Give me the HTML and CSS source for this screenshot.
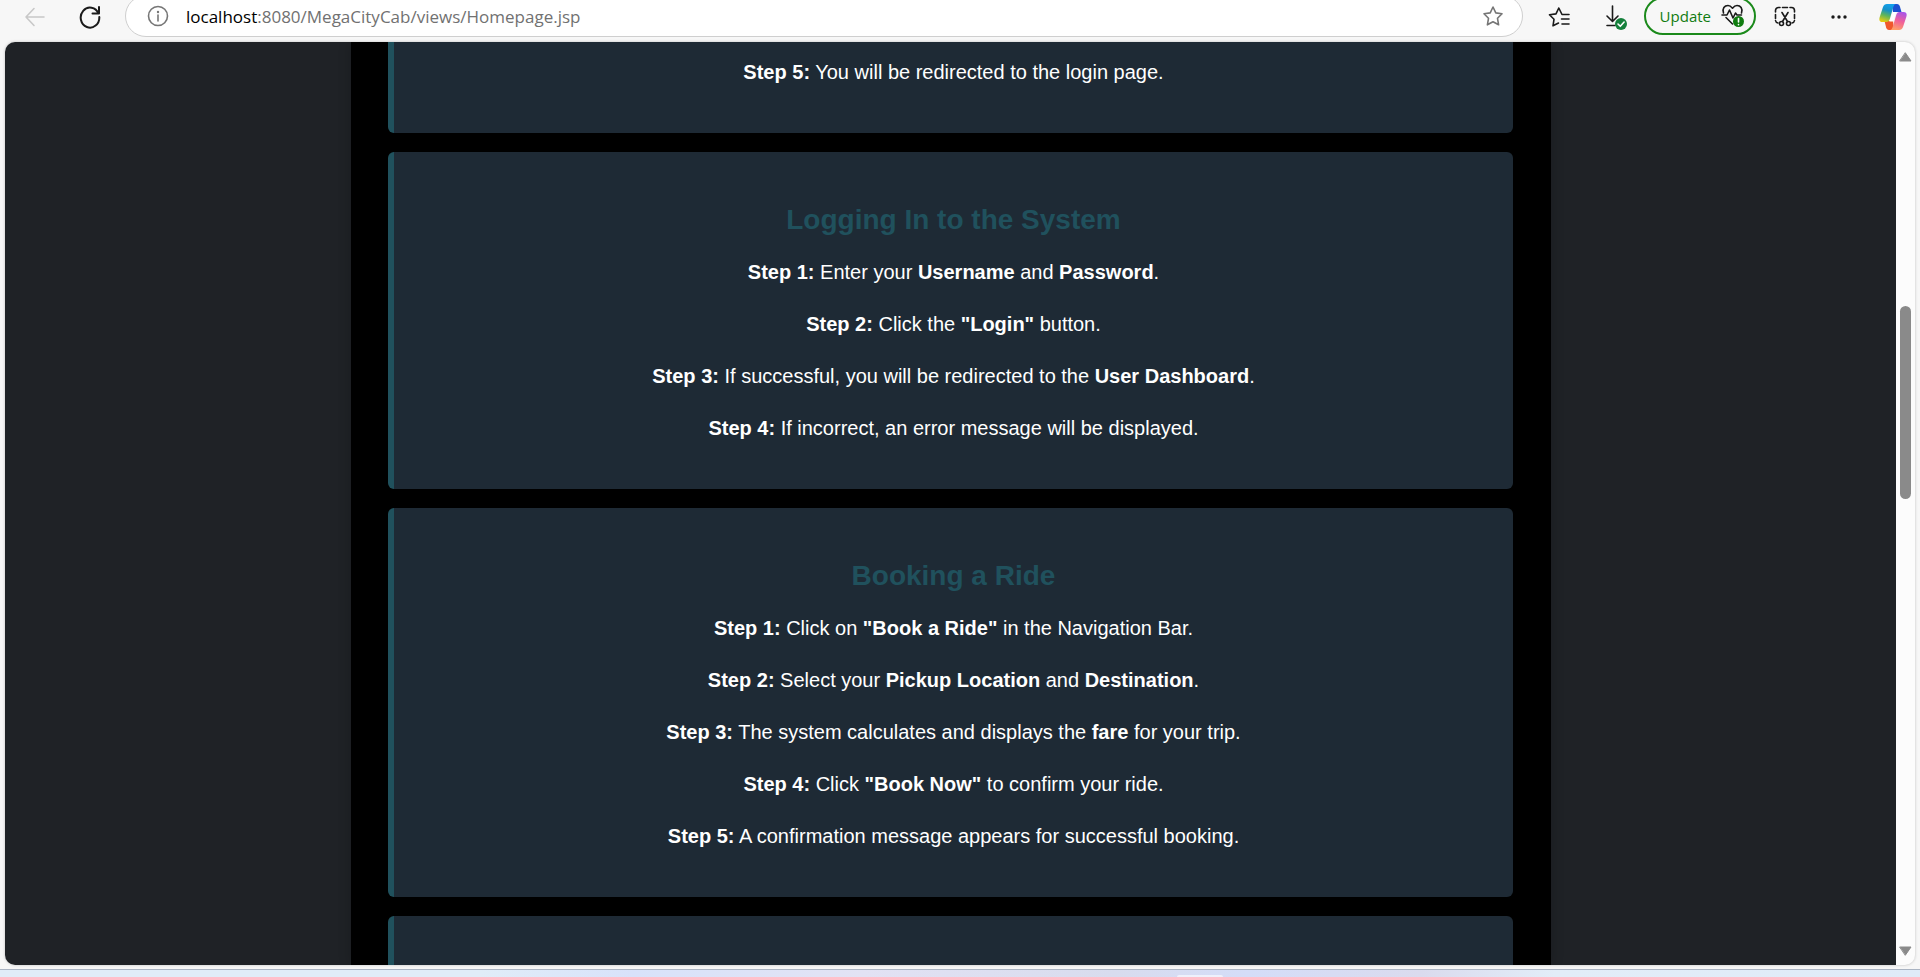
FILE: index.html
```html
<!DOCTYPE html>
<html lang="en">
<head>
<meta charset="utf-8">
<title>MegaCityCab</title>
<link rel="stylesheet" href="styles.css">
</head>
<body>
<header class="toolbar">
  <button class="tool back" aria-label="Back" disabled><svg width="22" height="20" viewBox="0 0 22 20"><path d="M10 1.500L2 10l8 8.500M2 10h18"/></svg></button>
  <button class="tool reload" aria-label="Reload"><svg width="22" height="24" viewBox="0 0 22 24"><path d="M19.500 8.500A9.300 10 0 1 0 20.300 12M20 2v6.500h-6.500"/></svg></button>
  <div class="address">
    <button class="tool info" aria-label="Site information"><svg width="22" height="22" viewBox="0 0 22 22"><circle cx="11" cy="11" r="9.500"/><path d="M11 10v6"/><circle class="dot" cx="11" cy="7" r="1.200"/></svg></button>
    <p class="url"><span class="host">localhost</span>:8080/MegaCityCab/views/Homepage.jsp</p>
    <button class="tool star" aria-label="Add to favorites"><svg width="22" height="22" viewBox="0 0 22 22"><path d="M11 2l2.800 5.900 6.200.9-4.500 4.500 1.100 6.500L11 16.700l-5.600 3.100 1.100-6.500L2 8.800l6.200-.9z"/></svg></button>
  </div>
  <div class="actions">
    <button class="tool" aria-label="Favorites"><svg width="22" height="22" viewBox="0 0 22 22"><path d="M21 8.500H14L10.800 2 8 7.900 1.500 8.800 6 13.300 5 19.800 10.500 17M13.500 13H21M14 18H21"/></svg></button>
    <button class="tool" aria-label="Downloads"><svg width="24" height="26" viewBox="0 0 24 26"><path d="M8.500 2v15M3 12l5.500 5.500L14 12M3 21.500h8"/><circle class="green" cx="17" cy="20" r="6"/><path class="mark" d="M14 20l2.300 2.300 3.800-4.300"/></svg></button>
    <button class="update">Update
      <svg width="24" height="26" viewBox="0 0 24 26"><path d="M2.500 10C1 5.500 3.500 2.500 7 2.500c2 0 3.500 1.500 4.500 2.700C12.500 4 14 2.500 16 2.500c3.500 0 6 3 4.500 7.500M1 12h5l2.500-5 3.500 8 2.500-5 1.500 2h4.500M5 14.500l6.500 6.500"/><circle class="green2" cx="17.500" cy="18.500" r="5.500"/><path class="mark" d="M17.500 15.500v3.500M17.500 21.500v.2"/></svg>
    </button>
    <button class="tool snip" aria-label="Screenshot"><svg width="22" height="22" viewBox="0 0 22 22"><path d="M1.500 6V4.500a3 3 0 0 1 3-3H6M8.500 1.500h5M16 1.500h1.500a3 3 0 0 1 3 3V6M20.500 8.500v4M1.500 8.500v4M1.500 14.500a3 3 0 0 0 2.500 2.500M20.500 14.500a3 3 0 0 1-2.500 2.500M8 6.500l5.500 9M14 6.500l-5.500 9"/><circle cx="7.500" cy="17.500" r="2"/><circle cx="14.500" cy="17.500" r="2"/></svg></button>
    <button class="tool more" aria-label="Settings and more"><svg width="18" height="6" viewBox="0 0 18 6"><circle class="dot" cx="3" cy="3" r="1.700"/><circle class="dot" cx="9" cy="3" r="1.700"/><circle class="dot" cx="15" cy="3" r="1.700"/></svg></button>
    <button class="tool copilot" aria-label="Copilot"><svg width="28" height="28" viewBox="0 0 28 28">
      <defs>
        <linearGradient id="cool" x1="0.600" y1="0" x2="0.300" y2="1"><stop offset="0" stop-color="#12a0ec"/><stop offset=".35" stop-color="#1590c8"/><stop offset=".65" stop-color="#5fb55a"/><stop offset="1" stop-color="#e8cc10"/></linearGradient>
        <linearGradient id="warm" x1="0.700" y1="0" x2="0.400" y2="1"><stop offset="0" stop-color="#a855e8"/><stop offset=".5" stop-color="#f0609a"/><stop offset="1" stop-color="#ffa068"/></linearGradient>
      </defs>
      <path fill="#1c50d0" d="M13 1h5c1.600 0 2.400 1 2.900 2.500L22.500 9H14z"/>
      <path fill="#f0582c" d="M15 27h-5c-1.600 0-2.400-1-2.900-2.500L5.500 18H14z"/>
      <path fill="url(#cool)" d="M8 1h9c-1.500 0-2.200 1.500-2.700 3l-3.500 12c-.6 2-1.600 3-3.300 3H3.500C.5 19-.2 17 .7 14L4 4C4.700 2 6 1 8 1z"/>
      <path fill="url(#warm)" d="M20 27h-9c1.500 0 2.200-1.500 2.700-3l3.500-12c.6-2 1.600-3 3.300-3h4c3 0 3.700 2 2.800 5L24 24c-.7 2-2 3-4 3z"/>
      <path fill="#fff" d="M13.500 9h4.300c-.8.700-1.300 1.700-1.600 3l-2 6.500h-4c.6-.6 1-1.500 1.300-2.500z"/>
    </svg></button>
  </div>
</header>

<div class="window">
  <main class="page">
    <div class="guide">
      <section class="card card-first">
        <p><strong>Step 5:</strong> You will be redirected to the login page.</p>
      </section>
      <section class="card">
        <h3>Logging In to the System</h3>
        <p><strong>Step 1:</strong> Enter your <strong>Username</strong> and <strong>Password</strong>.</p>
        <p><strong>Step 2:</strong> Click the <strong>"Login"</strong> button.</p>
        <p><strong>Step 3:</strong> If successful, you will be redirected to the <strong>User Dashboard</strong>.</p>
        <p><strong>Step 4:</strong> If incorrect, an error message will be displayed.</p>
      </section>
      <section class="card">
        <h3>Booking a Ride</h3>
        <p><strong>Step 1:</strong> Click on <strong>"Book a Ride"</strong> in the Navigation Bar.</p>
        <p><strong>Step 2:</strong> Select your <strong>Pickup Location</strong> and <strong>Destination</strong>.</p>
        <p><strong>Step 3:</strong> The system calculates and displays the <strong>fare</strong> for your trip.</p>
        <p><strong>Step 4:</strong> Click <strong>"Book Now"</strong> to confirm your ride.</p>
        <p><strong>Step 5:</strong> A confirmation message appears for successful booking.</p>
      </section>
      <section class="card card-last"></section>
    </div>
  </main>
  <div class="scrollbar">
    <svg width="13" height="10" viewBox="0 0 13 10"><path d="M6.500 1L12 9H1z"/></svg>
    <div class="track"><div class="thumb"></div></div>
    <svg width="13" height="10" viewBox="0 0 13 10"><path d="M6.500 9L12 1H1z"/></svg>
  </div>
</div>
<footer class="taskbar"><div class="task"></div></footer>
</body>
</html>
```
FILE: styles.css
```css
* {
  box-sizing: border-box;
}

body {
  margin: 0;
  height: 100vh;
  display: flex;
  flex-direction: column;
  overflow: hidden;
  background: #f7f7f7;
  font-family: "Liberation Sans", Arial, sans-serif;
}

button {
  padding: 0;
  border: 0;
  background: none;
  font: inherit;
}

svg {
  display: block;
  fill: none;
  stroke: #1a1a1a;
  stroke-width: 1.6;
  stroke-linecap: round;
  stroke-linejoin: round;
}

/* Browser toolbar */
.toolbar {
  display: flex;
  align-items: center;
  height: 42px;
  padding: 0 13px 8px 24px;
}

.tool {
  display: flex;
  flex: none;
}

.back svg {
  stroke: #c8c8c8;
}

.reload {
  margin-left: 33px;
}

.reload svg {
  stroke-width: 2;
}

.address {
  flex: 1;
  display: flex;
  align-items: center;
  height: 42px;
  margin-left: 24px;
  margin-top: -2px;
  padding: 0 18px 0 21px;
  border: 1px solid #cfcfcf;
  border-radius: 21px;
  background: #fff;
}

.info svg,
.star svg {
  stroke: #767676;
}

.dot {
  fill: #1a1a1a;
  stroke: none;
}

.info .dot {
  fill: #767676;
}

.url {
  flex: 1;
  margin: 0 0 0 17px;
  color: #717171;
  font: 17px "Open Sans", sans-serif;
}

.host {
  color: #000;
}

.actions {
  display: flex;
  align-items: center;
  margin-left: 25px;
}

.actions .tool + .tool {
  margin-left: 34px;
}

.update {
  display: flex;
  align-items: center;
  gap: 10px;
  height: 38px;
  margin: -2px 0 0 16px;
  padding: 0 9px 0 14px;
  border: 2px solid #1b8a1b;
  border-radius: 19px;
  color: #107c10;
  font: 15px "Open Sans", sans-serif;
}

.green,
.green2 {
  fill: #15803c;
  stroke: none;
}

.green2 {
  fill: #107c10;
}

.mark {
  stroke: #fff;
}

.actions .snip {
  margin-left: 18px;
}

.actions .tool + .copilot {
  margin-left: 31px;
}

.copilot svg {
  stroke: none;
}

/* Page viewport */
.window {
  flex: 1;
  min-height: 0;
  display: flex;
  margin: 0 5px 4px;
  overflow: hidden;
  border-radius: 10px;
  background: #fcfcfc;
  box-shadow: 0 0 3px #bdbdbd;
}

.page {
  flex: 1;
  overflow: hidden;
  background: #1f2226;
}

.guide {
  display: flex;
  flex-direction: column;
  gap: 19px;
  max-width: 1200px;
  height: 100%;
  margin: 0 auto;
  padding: 0 38px 0 37px;
  background: #000;
  box-shadow: 0 0 12px rgba(0, 0, 0, 0.2);
}

.card {
  flex: none;
  padding: 45px 24px 45px 25px;
  border-left: 6px solid #20515d;
  border-radius: 6px;
  background: #1e2a35;
  color: #fff;
  font-size: 20px;
  line-height: 32px;
  text-align: center;
}

.card-first {
  padding-top: 14px;
  border-radius: 0 0 6px 6px;
}

.card-last {
  flex: 1;
  padding: 0;
  border-radius: 6px 6px 0 0;
}

.card h3 {
  margin: 0 0 14px;
  color: #20515d;
  font-size: 28px;
  line-height: 45px;
}

.card p {
  margin: 0;
}

.card p + p {
  margin-top: 20px;
}

.scrollbar {
  display: flex;
  flex-direction: column;
  align-items: center;
  width: 19px;
  padding: 10px 0 9px;
}

.scrollbar svg {
  fill: #8a8a8a;
  stroke: #8a8a8a;
  stroke-width: 1;
}

.track {
  flex: 1;
  width: 11px;
  padding-top: 244px;
}

.thumb {
  height: 193px;
  border-radius: 6px;
  background: #8a8a8a;
}

.taskbar {
  height: 8px;
  border-top: 1px solid #a9b3c2;
  background: linear-gradient(90deg, #e0edf8 25%, #d8e2fa 33%, #e2e2f4 45%, #d8dcee 58%, #d4ddf8 65%, #dadbee 74%, #e2edf8 81%, #dfebf8);
}

.task {
  width: 46px;
  height: 2px;
  margin: 5px 0 0 1177px;
  border-radius: 4px 4px 0 0;
  background: #eef1fc;
}
```
